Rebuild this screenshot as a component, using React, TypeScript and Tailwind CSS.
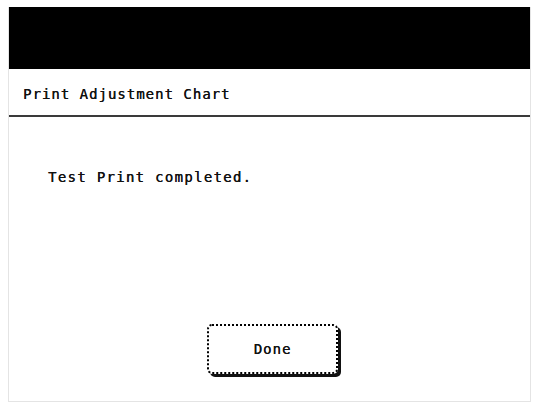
export default function App() {
  return (
    <div className="w-[543px] h-[406px] bg-white pt-[7px] pl-[8px] pr-[12px] pb-[4px]" style={{ fontFamily: '"DejaVu Sans Mono", "Liberation Mono", monospace' }}>
      <div className="h-full flex flex-col border-l border-r border-b border-[#e4e4e4]">
        {/* Top bar */}
        <div className="h-[62px] bg-black shrink-0" />

        {/* Title */}
        <div className="h-[48px] shrink-0 flex items-center pl-[14px] border-b-2 border-[#3a3a3a]">
          <span className="text-[14px] tracking-[1px] text-[#111] pt-[4px] [text-shadow:0.3px_0_0_#111]">Print Adjustment Chart</span>
        </div>

        {/* Content */}
        <div className="flex-1 flex flex-col">
          <div className="pl-[39px] pt-[50px] text-[14px] tracking-[1.3px] text-[#111] [text-shadow:0.3px_0_0_#111]">Test Print completed.</div>
          <div className="flex-1" />
          <div className="flex justify-center pb-[27px] pl-[6px]">
            <div className="w-[131px] h-[50px] rounded-[5px] border-2 border-dotted border-black shadow-[3px_3px_0_#111] flex items-center justify-center text-[14px] tracking-[1px] text-[#111] [text-shadow:0.3px_0_0_#111]">
              Done
            </div>
          </div>
        </div>
      </div>
    </div>
  )
}
